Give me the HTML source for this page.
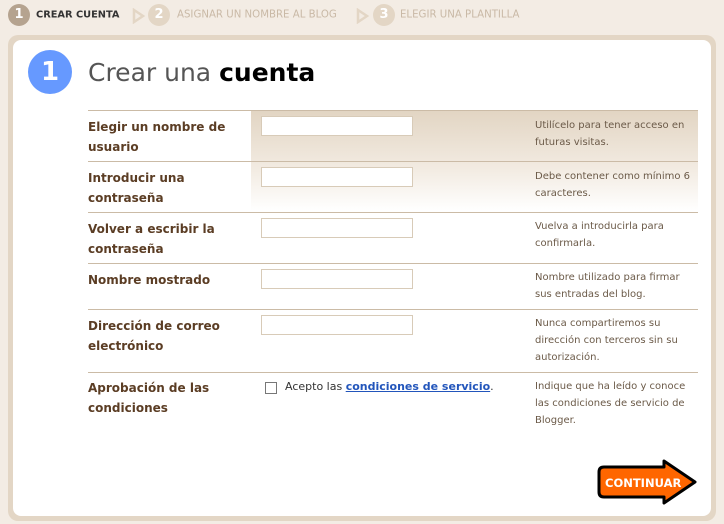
<!DOCTYPE html>
<html><head><style>
body{margin:0;width:724px;height:524px;background:#f3ece4;font-family:"DejaVu Sans","Liberation Sans",sans-serif;position:relative;overflow:hidden}
.ab{position:absolute}
.step{position:absolute;top:15px;font-size:10.5px;letter-spacing:0;white-space:nowrap;transform:translateY(-50%)}
.sc{position:absolute;width:22px;height:22px;border-radius:50%;color:#fff;font-weight:bold;font-size:13px;text-align:center;line-height:22px;top:4px}
.outer{position:absolute;left:8px;top:35px;width:708px;height:486px;background:#e3d6c5;border-radius:10px}
.inner{position:absolute;left:13px;top:40px;width:698px;height:476px;background:#fff;border-radius:8px}
.lab{position:absolute;left:88px;font-size:12px;font-weight:bold;color:#5b3d24;line-height:20px;width:150px}
.hlp{position:absolute;left:535px;font-size:10px;color:#6b5a48;line-height:17px;width:158px}
.inp{position:absolute;left:261px;width:150px;height:18px;border:1px solid #d8cbb8;background:#fff}
.line{position:absolute;left:88px;width:610px;height:1px;background:#cbbba6}
</style></head><body>
<div class="sc" style="left:8px;background:#b5a38f">1</div>
<div class="step" style="left:36px;color:#333;font-weight:bold;font-size:9.8px">CREAR CUENTA</div>
<svg class="ab" style="left:132px;top:8px" width="14" height="16"><path d="M2 2 L11 8 L2 14 Z" fill="none" stroke="#e3d6c5" stroke-width="2.5"/></svg>
<div class="sc" style="left:148px;background:#e3d6c5">2</div>
<div class="step" style="left:177px;color:#c9b9a6;font-size:10.2px">ASIGNAR UN NOMBRE AL BLOG</div>
<svg class="ab" style="left:356px;top:8px" width="14" height="16"><path d="M2 2 L11 8 L2 14 Z" fill="none" stroke="#e3d6c5" stroke-width="2.5"/></svg>
<div class="sc" style="left:373px;background:#e3d6c5">3</div>
<div class="step" style="left:400px;color:#c9b9a6;font-size:10.2px">ELEGIR UNA PLANTILLA</div>

<div class="outer"></div>
<div class="inner"></div>
<div class="ab" style="left:28px;top:50px;width:44px;height:44px;border-radius:50%;background:#6699ff;color:#fff;font-size:26px;font-weight:bold;text-align:center;line-height:44px">1</div>
<div class="ab" style="left:88px;top:56px;font-size:25px;color:#555;line-height:34px">Crear una <b style="color:#000">cuenta</b></div>

<div class="ab" style="left:251px;top:111px;width:447px;height:100px;background:linear-gradient(#e2d5c3,#f3ece3 60%,#fff)"></div>
<div class="line" style="top:110px"></div>
<div class="line" style="top:161px"></div>
<div class="line" style="top:212px"></div>
<div class="line" style="top:263px"></div>
<div class="line" style="top:309px"></div>
<div class="line" style="top:372px"></div>

<div class="lab" style="top:117px">Elegir un nombre de usuario</div>
<div class="inp" style="top:116px"></div>
<div class="hlp" style="top:117px">Utilícelo para tener acceso en futuras visitas.</div>

<div class="lab" style="top:168px">Introducir una contraseña</div>
<div class="inp" style="top:167px"></div>
<div class="hlp" style="top:168px">Debe contener como mínimo 6 caracteres.</div>

<div class="lab" style="top:219px">Volver a escribir la contraseña</div>
<div class="inp" style="top:218px"></div>
<div class="hlp" style="top:218px">Vuelva a introducirla para confirmarla.</div>

<div class="lab" style="top:270px">Nombre mostrado</div>
<div class="inp" style="top:269px"></div>
<div class="hlp" style="top:269px">Nombre utilizado para firmar sus entradas del blog.</div>

<div class="lab" style="top:316px">Dirección de correo electrónico</div>
<div class="inp" style="top:315px"></div>
<div class="hlp" style="top:315px">Nunca compartiremos su dirección con terceros sin su autorización.</div>

<div class="lab" style="top:378px">Aprobación de las condiciones</div>
<div class="ab" style="left:265px;top:382px;width:10px;height:10px;border:1px solid #777;background:#fff"></div>
<div class="ab" style="left:285px;top:380px;font-size:11px;color:#333">Acepto las <a style="color:#2255bb;font-weight:bold;text-decoration:underline">condiciones de servicio</a>.</div>
<div class="hlp" style="top:378px">Indique que ha leído y conoce las condiciones de servicio de Blogger.</div>

<svg class="ab" style="left:596px;top:458px" width="104" height="48"><path d="M8 9 H68 V3 L99 24 L68 45 V39 H8 Q3 39 3 34 V14 Q3 9 8 9 Z" fill="#ff6600" stroke="#000" stroke-width="3" stroke-linejoin="round"/><text x="9" y="29" font-family="DejaVu Sans,Liberation Sans,sans-serif" font-weight="bold" font-size="11.5" fill="#fff">CONTINUAR</text></svg>
</body></html>
